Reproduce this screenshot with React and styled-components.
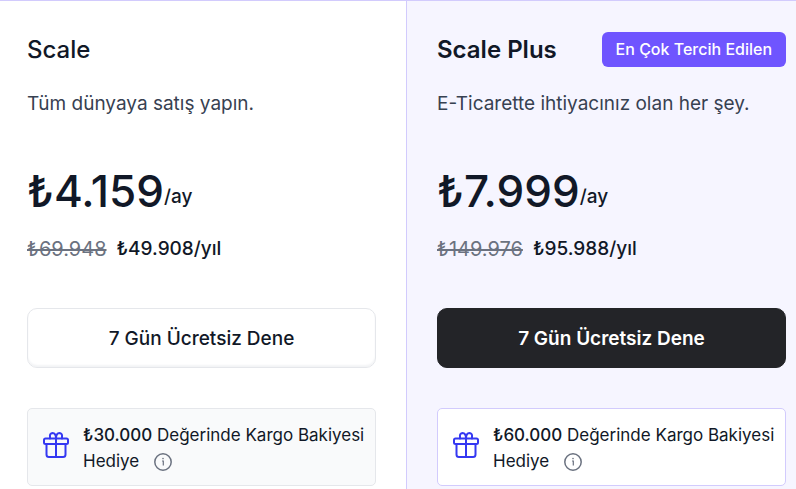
import styled, { createGlobalStyle } from 'styled-components';

const plans = [
    {
        name: 'Scale',
        description: 'Tüm dünyaya satış yapın.',
        monthly: '₺4.159',
        oldYearly: '₺69.948',
        yearly: '₺49.908/yıl',
        gift: '₺30.000'
    },
    {
        name: 'Scale Plus',
        description: 'E-Ticarette ihtiyacınız olan her şey.',
        monthly: '₺7.999',
        oldYearly: '₺149.976',
        yearly: '₺95.988/yıl',
        gift: '₺60.000',
        badge: 'En Çok Tercih Edilen'
    }
];

function GiftIcon () {

    return (

        <GiftSvg viewBox="0 0 26 26" aria-hidden="true">
            <rect x="1" y="6.5" width="24" height="5.5" rx="1.5" />
            <path d="M3.5 12v10.5a2.5 2.5 0 0 0 2.5 2.5h14a2.5 2.5 0 0 0 2.5-2.5V12" />
            <path d="M13 6.5V25" />
            <path d="M13 6.5C13 3 11.500 1 9.500 1A2.800 2.800 0 0 0 7 4.500V6.500" />
            <path d="M13 6.5C13 3 14.500 1 16.500 1A2.800 2.800 0 0 1 19 4.500V6.500" />
        </GiftSvg>

    );

}

function InfoIcon () {

    return (

        <svg width="18" height="18" viewBox="0 0 18 18" fill="none" stroke="currentColor" aria-hidden="true">
            <circle cx="9" cy="9" r="8.2" strokeWidth="1.5" />
            <path d="M8 8h1.300v4.500" strokeWidth="1.2" />
            <circle cx="9" cy="5.600" r="0.8" fill="currentColor" stroke="none" />
        </svg>

    );

}

function Plan ({ plan }) {

    const featured = Boolean(plan.badge);

    return (

        <PlanColumn $featured={featured}>
            <PlanHeader>
                <PlanName $featured={featured}>{plan.name}</PlanName>
                {plan.badge && <Badge>{plan.badge}</Badge>}
            </PlanHeader>
            <Description>{plan.description}</Description>
            <Price>
                <Amount>{plan.monthly}</Amount>
                <Period>/ay</Period>
            </Price>
            <YearlyPrice>
                <OldPrice>{plan.oldYearly}</OldPrice>
                <span>{plan.yearly}</span>
            </YearlyPrice>
            <TryButton type="button" $featured={featured}>7 Gün Ücretsiz Dene</TryButton>
            <GiftBox $featured={featured}>
                <GiftIcon />
                <GiftText>
                    <strong>{plan.gift}</strong> Değerinde Kargo Bakiyesi Hediye
                    <InfoButton type="button" aria-label="Bilgi"><InfoIcon /></InfoButton>
                </GiftText>
            </GiftBox>
        </PlanColumn>

    );

}

function App () {

    return (

        <>
            <GlobalStyle />
            <Plans>
                {plans.map(plan => <Plan key={plan.name} plan={plan} />)}
            </Plans>
        </>

    );

}

export default App;

const GlobalStyle = createGlobalStyle`

    body {
        margin: 0;
        background: #FFFFFF;
        color: #111827;
        font-family: 'Inter', 'Liberation Sans', sans-serif;
    }

    button {
        font-family: inherit;
        cursor: pointer;
    }

`;

const Plans = styled.main`

    display: flex;
    min-height: 100vh;
    box-sizing: border-box;
    border-top: 1px solid #D2CBFD;

`;

const PlanColumn = styled.section`

    flex: 1 1 0;
    min-width: 0;
    padding: ${({ $featured }) => $featured ? '31px 10px 3px 30px' : '31px 30px 3px 27px'};
    border-left: ${({ $featured }) => $featured ? '1px solid #D2CBFD' : 'none'};
    background: ${({ $featured }) => $featured ? '#F6F5FF' : '#FFFFFF'};

`;

const PlanHeader = styled.header`

    display: flex;
    align-items: center;
    justify-content: space-between;
    height: 35px;

`;

const PlanName = styled.h2`

    margin: 0;
    font-size: 24px;
    line-height: 32px;
    font-weight: ${({ $featured }) => $featured ? 600 : 500};

`;

const Badge = styled.span`

    padding: 6px 14px;
    border-radius: 6px;
    background: #6F55FF;
    color: #FFFFFF;
    font-size: 16px;
    line-height: 23px;
    font-weight: 500;
    white-space: nowrap;

`;

const Description = styled.p`

    margin: 21px 0 0;
    font-size: 19px;
    line-height: 32px;
    color: #374151;

`;

const Price = styled.div`

    display: flex;
    align-items: center;
    margin-top: 39px;

`;

const Amount = styled.span`

    font-size: 44px;
    line-height: 64px;
    font-weight: 500;

`;

const Period = styled.span`

    padding-top: 12px;
    font-size: 19px;
    line-height: 24px;
    font-weight: 500;

`;

const YearlyPrice = styled.div`

    display: flex;
    gap: 10px;
    margin-top: 10px;
    font-size: 19px;
    line-height: 32px;
    font-weight: 500;

`;

const OldPrice = styled.s`

    font-size: 20px;
    font-weight: 400;
    color: #6B7280;

`;

const TryButton = styled.button`

    display: block;
    width: 100%;
    height: 60px;
    margin-top: 43px;
    border: 1px solid ${({ $featured }) => $featured ? '#232428' : '#E5E7EB'};
    border-radius: 10px;
    background: ${({ $featured }) => $featured ? '#232428' : '#FFFFFF'};
    box-shadow: ${({ $featured }) => $featured ? 'none' : 'inset 0 -2px 2px #F3F4F6'};
    color: ${({ $featured }) => $featured ? '#FFFFFF' : '#111827'};
    font-size: 19px;
    font-weight: ${({ $featured }) => $featured ? 600 : 500};

`;

const GiftBox = styled.div`

    display: flex;
    align-items: flex-start;
    gap: 14px;
    margin-top: 40px;
    padding: 13px 8px 11px 15px;
    border: 1px solid ${({ $featured }) => $featured ? '#D2CBFD' : '#E5E7EB'};
    border-radius: 5px;
    background: ${({ $featured }) => $featured ? '#FFFFFF' : '#F9FAFB'};

`;

const GiftSvg = styled.svg`

    flex: none;
    width: 26px;
    height: 26px;
    margin-top: 10px;
    fill: none;
    stroke: #3538F2;
    stroke-width: 2;
    stroke-linecap: round;
    stroke-linejoin: round;

`;

const GiftText = styled.p`

    margin: 0;
    font-size: 17px;
    line-height: 26px;

    strong {
        font-weight: 500;
    }

`;

const InfoButton = styled.button`

    display: inline-flex;
    margin-left: 15px;
    padding: 0;
    border: none;
    background: none;
    color: #6B7280;
    vertical-align: text-bottom;

`;
